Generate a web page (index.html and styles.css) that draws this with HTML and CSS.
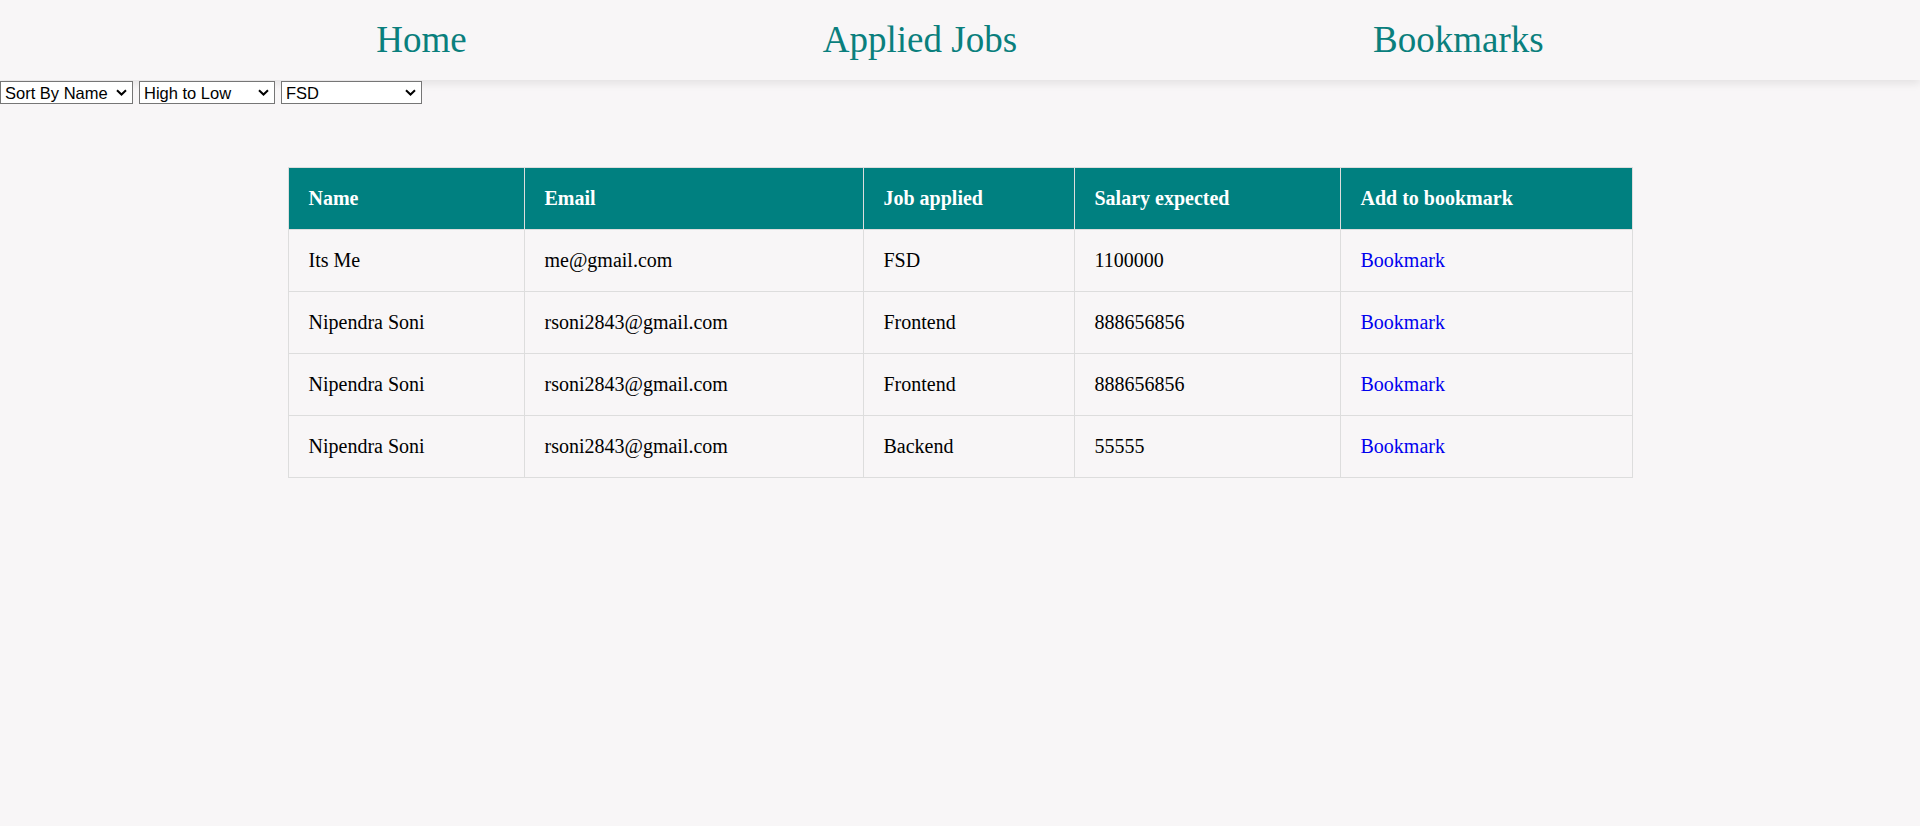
FILE: index.html
```html
<!DOCTYPE html>
<html lang="en">
<head>
<meta charset="utf-8">
<title>Applied Jobs</title>
<link rel="stylesheet" href="styles.css">
</head>
<body>
<nav class="navbar">
  <a class="nav-link" href="#">Home</a>
  <a class="nav-link" href="#">Applied Jobs</a>
  <a class="nav-link" href="#">Bookmarks</a>
</nav>
<div class="filters">
  <select class="sel sel-sort">
    <option>Sort By Name</option>
    <option>Sort By Salary</option>
  </select>
  <select class="sel sel-order">
    <option>High to Low</option>
    <option>Low to High</option>
  </select>
  <select class="sel sel-job">
    <option>FSD</option>
    <option>Frontend</option>
    <option>Backend</option>
  </select>
</div>
<table class="jobs">
  <colgroup>
    <col class="c-name">
    <col class="c-email">
    <col class="c-job">
    <col class="c-salary">
    <col class="c-bm">
  </colgroup>
  <thead>
    <tr>
      <th>Name</th>
      <th>Email</th>
      <th>Job applied</th>
      <th>Salary expected</th>
      <th>Add to bookmark</th>
    </tr>
  </thead>
  <tbody>
    <tr>
      <td>Its Me</td>
      <td>me@gmail.com</td>
      <td>FSD</td>
      <td>1100000</td>
      <td><a class="bm" href="#">Bookmark</a></td>
    </tr>
    <tr>
      <td>Nipendra Soni</td>
      <td>rsoni2843@gmail.com</td>
      <td>Frontend</td>
      <td>888656856</td>
      <td><a class="bm" href="#">Bookmark</a></td>
    </tr>
    <tr>
      <td>Nipendra Soni</td>
      <td>rsoni2843@gmail.com</td>
      <td>Frontend</td>
      <td>888656856</td>
      <td><a class="bm" href="#">Bookmark</a></td>
    </tr>
    <tr>
      <td>Nipendra Soni</td>
      <td>rsoni2843@gmail.com</td>
      <td>Backend</td>
      <td>55555</td>
      <td><a class="bm" href="#">Bookmark</a></td>
    </tr>
  </tbody>
</table>
</body>
</html>
```
FILE: styles.css
```css
html, body {
  margin: 0;
  padding: 0;
}
body {
  background: #f8f6f7;
  font-family: "Liberation Serif", "Times New Roman", serif;
  color: #000;
}
.navbar {
  height: 80px;
  display: flex;
  align-items: center;
  justify-content: center;
  gap: 356px;
  background: #f8f6f7;
  box-shadow: 0 4px 8px rgba(0, 0, 0, 0.08);
}
.nav-link {
  color: #0a7f7d;
  text-decoration: none;
  font-size: 37px;
  line-height: 1;
  margin-top: -2px;
}
.filters {
  display: flex;
  gap: 6px;
  padding-top: 1px;
}
.sel {
  -webkit-appearance: none;
  appearance: none;
  font-family: "Liberation Sans", Arial, sans-serif;
  font-size: 16.5px;
  height: 23px;
  padding: 0 0 0 4px;
  border: 1px solid #767676;
  border-radius: 0;
  color: #000;
  background-color: #fff;
  background-image: url("data:image/svg+xml;utf8,<svg xmlns='http://www.w3.org/2000/svg' width='11' height='7' viewBox='0 0 11 7'><path d='M1 1.2 L5.5 5.5 L10 1.2' fill='none' stroke='black' stroke-width='2'/></svg>");
  background-repeat: no-repeat;
  background-position: right 5px center;
  background-size: 11px 7px;
}
.sel-sort { width: 133px; }
.sel-order { width: 136px; }
.sel-job { width: 141px; }
.jobs {
  width: 70%;
  margin: 63px auto 0;
  border-collapse: collapse;
  table-layout: fixed;
  font-size: 20px;
}
.c-name { width: 236px; }
.c-email { width: 339px; }
.c-job { width: 211px; }
.c-salary { width: 266px; }
.c-bm { width: 292px; }
.jobs th,
.jobs td {
  border: 1px solid #dddddd;
  padding: 19px 20px;
  text-align: left;
  line-height: 23px;
}
.jobs th {
  background: #008080;
  color: #fff;
  font-weight: bold;
}
.bm {
  color: #0000ee;
  text-decoration: none;
}
```
